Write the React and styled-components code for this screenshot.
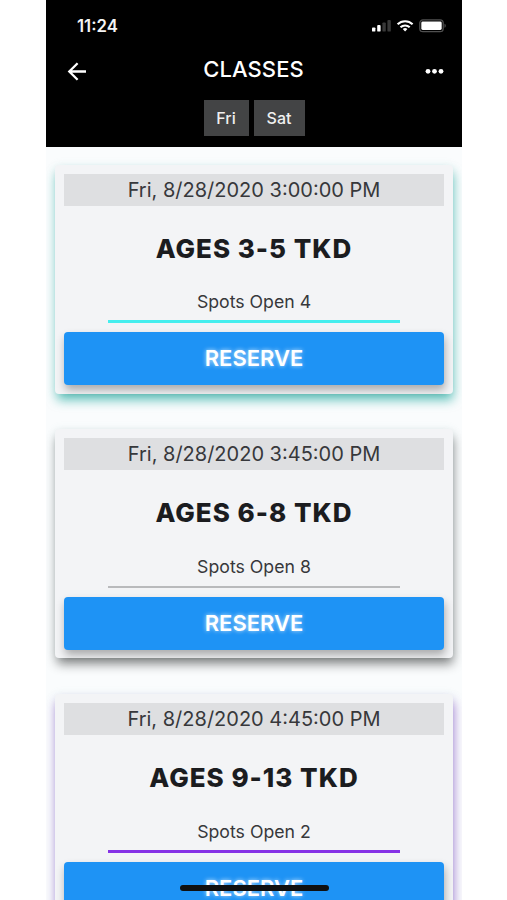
import React, { useState } from "react";
import styled, { createGlobalStyle } from "styled-components";

const classes = [
  {
    id: 1,
    time: "Fri, 8/28/2020 3:00:00 PM",
    title: "AGES 3-5 TKD",
    spots: 4,
    line: "3px solid #45eeee",
    shadow: "rgba(20, 165, 155, 0.66)",
  },
  {
    id: 2,
    time: "Fri, 8/28/2020 3:45:00 PM",
    title: "AGES 6-8 TKD",
    spots: 8,
    line: "2px solid #b9babc",
    shadow: "rgba(0, 0, 0, 0.46)",
  },
  {
    id: 3,
    time: "Fri, 8/28/2020 4:45:00 PM",
    title: "AGES 9-13 TKD",
    spots: 2,
    line: "3px solid #8632e6",
    shadow: "rgba(100, 30, 180, 0.6)",
  },
];

function StatusBar() {
  return (
    <StatusStyled>
      <span>11:24</span>
      <svg width="74" height="14" viewBox="0 0 74 14">
        <g fill="#fff">
          <rect x="0" y="8.4" width="3.4" height="4.2" rx="0.9" />
          <rect x="5.2" y="6" width="3.4" height="6.6" rx="0.9" />
          <rect x="10.4" y="3.4" width="3.4" height="9.2" rx="0.9" opacity="0.22" />
          <rect x="15.4" y="1" width="3.4" height="11.6" rx="0.9" opacity="0.22" />
        </g>
        <g fill="none" stroke="#fff" strokeWidth="2.1">
          <path d="M25.6 5.3a10.6 10.6 0 0 1 15 0" />
          <path d="M28.5 8.3a6.6 6.6 0 0 1 9.2 0" />
        </g>
        <path d="M33.1 12.4l-2.3-2.4a3.4 3.4 0 0 1 4.6 0z" fill="#fff" />
        <rect x="47.8" y="0.9" width="23.4" height="11.7" rx="3.2" fill="#000" stroke="#505050" strokeWidth="1.3" />
        <rect x="49.3" y="2.6" width="20.4" height="8.3" rx="1.4" fill="#fff" />
        <path d="M72.5 4.8c1.7.6 1.7 3.3 0 3.9z" fill="#505050" />
      </svg>
    </StatusStyled>
  );
}

function ClassCard({ item }) {
  return (
    <CardStyled $shadow={item.shadow}>
      <DateBar>{item.time}</DateBar>
      <ClassTitle>{item.title}</ClassTitle>
      <Spots $line={item.line}>Spots Open {item.spots}</Spots>
      <ReserveButton>RESERVE</ReserveButton>
    </CardStyled>
  );
}

function App() {
  const [day, setDay] = useState("Fri");
  return (
    <>
      <GlobalStyle />
      <PhoneStyled>
        <HeaderStyled>
          <StatusBar />
          <TitleBar>
            <svg width="20" height="20" viewBox="0 0 20 20" fill="none" stroke="#fff" strokeWidth="2.3">
              <path d="M19 10.5H2.4M10.6 2.3L2.3 10.5l8.3 8.2" />
            </svg>
            <h1>CLASSES</h1>
            <svg width="20" height="6" viewBox="0 0 20 6" fill="#fff">
              <circle cx="3" cy="3.3" r="2.4" />
              <circle cx="9.5" cy="3.3" r="2.4" />
              <circle cx="16" cy="3.3" r="2.4" />
            </svg>
          </TitleBar>
          <Days>
            {["Fri", "Sat"].map((name) => (
              <DayButton
                key={name}
                $width={name === "Fri" ? 45 : 51}
                aria-pressed={day === name}
                onClick={() => setDay(name)}
              >
                {name}
              </DayButton>
            ))}
          </Days>
        </HeaderStyled>
        <ListStyled>
          {classes.map((item) => (
            <ClassCard key={item.id} item={item} />
          ))}
        </ListStyled>
        <HomeIndicator />
      </PhoneStyled>
    </>
  );
}

const GlobalStyle = createGlobalStyle`
  * {
    box-sizing: border-box;
    margin: 0;
    padding: 0;
  }
  body {
    background: #fff;
    overflow: hidden;
    font-family: Inter, "Liberation Sans", sans-serif;
  }
  button {
    border: none;
    font-family: inherit;
    cursor: pointer;
  }
`;

const PhoneStyled = styled.div`
  position: relative;
  width: 416px;
  height: 900px;
  margin-left: 46px;
  overflow: hidden;
  background: #fafcfd;
`;

const HeaderStyled = styled.header`
  height: 147px;
  background: #000;
  color: #fff;
`;

const StatusStyled = styled.div`
  display: flex;
  justify-content: space-between;
  align-items: center;
  height: 52px;
  padding: 0 16px 0 31px;
  span {
    font-size: 16.8px;
    font-weight: 600;
    color: #f4f4f4;
  }
`;

const TitleBar = styled.div`
  display: flex;
  justify-content: space-between;
  align-items: center;
  height: 38px;
  padding: 0 17px 0 21px;
  h1 {
    font-size: 22px;
    line-height: 26px;
    font-weight: 500;
    letter-spacing: 0.1px;
    padding: 0 5px 4px 0;
  }
`;

const Days = styled.div`
  display: flex;
  justify-content: center;
  gap: 5px;
  margin-top: 10px;
`;

const DayButton = styled.button`
  width: ${(props) => props.$width}px;
  height: 36px;
  background: #434445;
  color: #f0f0f0;
  font-size: 16px;
  font-weight: 450;
`;

const ListStyled = styled.main`
  display: flex;
  flex-direction: column;
  gap: 35.8px;
  padding: 17.5px 9px;
`;

const CardStyled = styled.section`
  display: flex;
  flex-direction: column;
  align-items: center;
  height: 229px;
  flex-shrink: 0;
  padding: 9px 9px 0;
  background: #f3f4f6;
  border-radius: 4px;
  box-shadow: 1px 7px 11px -1px ${(props) => props.$shadow}, 0 0 8px rgba(120, 180, 180, 0.12);
`;

const DateBar = styled.div`
  width: 100%;
  height: 32px;
  flex-shrink: 0;
  background: #dedfe1;
  color: #37383b;
  font-size: 20px;
  line-height: 33px;
  text-align: center;
`;

const ClassTitle = styled.h2`
  margin-top: 27px;
  color: #1b1c1f;
  font-size: 26px;
  line-height: 32px;
  font-weight: 800;
  letter-spacing: 1px;
`;

const Spots = styled.p`
  width: 292px;
  height: 38px;
  flex-shrink: 0;
  margin-top: 20.5px;
  border-bottom: ${(props) => props.$line};
  color: #37383b;
  font-size: 17.7px;
  line-height: 33px;
  text-align: center;
`;

const ReserveButton = styled.button`
  width: 100%;
  height: 53px;
  flex-shrink: 0;
  margin-top: 9px;
  padding-bottom: 1px;
  border-radius: 4px;
  background: #1e93f5;
  color: #fff;
  font-size: 22px;
  font-weight: 600;
  text-shadow: 0 0 4px rgba(255, 255, 255, 0.75);
  box-shadow: 1px 5px 8px rgba(0, 0, 0, 0.3);
`;

// sits on top of the scrolling list
const HomeIndicator = styled.div`
  position: absolute;
  left: 134px;
  bottom: 9px;
  width: 149px;
  height: 6px;
  border-radius: 3px;
  background: #101010;
`;

export default App;
